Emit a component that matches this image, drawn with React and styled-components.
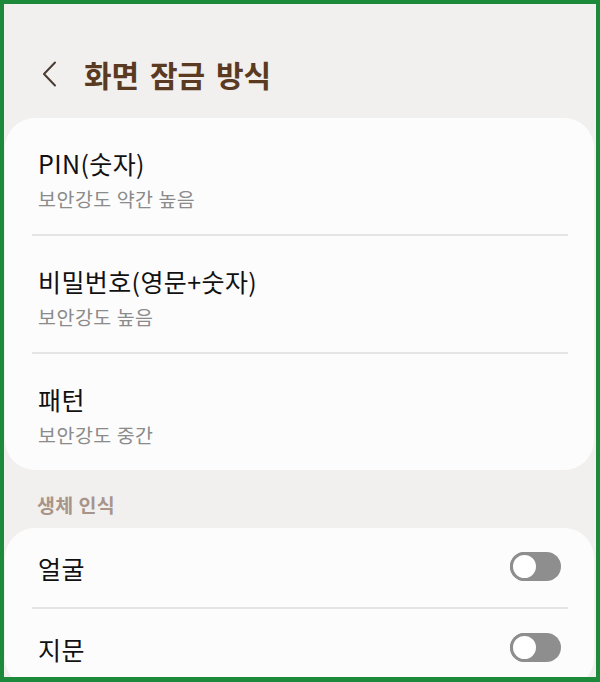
import React from 'react';
import styled, { createGlobalStyle } from 'styled-components';

const GlobalStyle = createGlobalStyle`
  html, body {
    margin: 0;
    padding: 0;
    background: #ffffff;
  }
  * {
    box-sizing: border-box;
  }
`;

const Frame = styled.div`
  width: 600px;
  height: 682px;
  border: 4px solid #1d8a3b;
  border-bottom-width: 5px;
  background: #f2f0ee;
  overflow: hidden;
  font-family: "Noto Sans CJK KR", "Noto Sans", sans-serif;
`;

const Header = styled.div`
  display: flex;
  align-items: center;
  height: 44px;
  margin-top: 48px;
  margin-bottom: 22px;
  padding-left: 38px;
`;

const BackButton = styled.div`
  width: 18px;
  height: 26px;
  display: flex;
  align-items: center;
  color: #4b3c33;
  margin-right: 24px;
`;

const Title = styled.h1`
  margin: 0;
  font-size: 30px;
  font-weight: 700;
  color: #5b3a22;
  word-spacing: 4px;
  line-height: 44px;
`;

const Card = styled.div`
  background: #fcfcfc;
  border-radius: 30px;
  margin: 0 2px 0 1px;
`;

const Row = styled.div`
  display: flex;
  align-items: center;
  justify-content: space-between;
  padding: ${p => (p.$compact ? '0 33px' : '30px 33px 24px')};
  height: ${p => (p.$compact ? '79px' : 'auto')};
`;

const TextBlock = styled.div`
  display: flex;
  flex-direction: column;
`;

const RowTitle = styled.div`
  font-size: 25px;
  line-height: 30px;
  letter-spacing: 0.4px;
  color: #111111;
`;

const RowSub = styled.div`
  font-size: 19.5px;
  line-height: 22px;
  letter-spacing: 0.5px;
  margin-top: 10px;
  color: #8b8b8b;
`;

const Divider = styled.div`
  height: 2px;
  background: #e4e4e4;
  margin: 0 26px 0 27px;
`;

const SectionLabel = styled.div`
  padding: 24px 0 12px 33px;
  font-size: 19.5px;
  line-height: 22px;
  letter-spacing: 0.4px;
  font-weight: 700;
  color: #a8958a;
`;

const Toggle = styled.div`
  position: relative;
  width: 51px;
  height: 29px;
  border-radius: 15px;
  background: #8e8e8e;
  flex-shrink: 0;
  margin-top: -3px;
`;

const Knob = styled.div`
  position: absolute;
  left: 0;
  top: 0;
  width: 29px;
  height: 29px;
  border-radius: 50%;
  background: #ffffff;
  border: 3px solid #8e8e8e;
`;

const lockTypes = [
  { title: 'PIN(숫자)', sub: '보안강도 약간 높음' },
  { title: '비밀번호(영문+숫자)', sub: '보안강도 높음' },
  { title: '패턴', sub: '보안강도 중간' },
];

const biometrics = ['얼굴', '지문'];

export default function App() {
  return (
    <>
      <GlobalStyle />
      <Frame>
        <Header>
          <BackButton>
            <svg width="16" height="26" viewBox="0 0 16 26" fill="none">
              <polyline points="13,1.5 2,13 13,24.5" stroke="currentColor" strokeWidth="2" strokeLinecap="round" strokeLinejoin="round" />
            </svg>
          </BackButton>
          <Title>화면 잠금 방식</Title>
        </Header>

        <Card>
          {lockTypes.map((item, i) => (
            <React.Fragment key={item.title}>
              {i > 0 && <Divider />}
              <Row>
                <TextBlock>
                  <RowTitle>{item.title}</RowTitle>
                  <RowSub>{item.sub}</RowSub>
                </TextBlock>
              </Row>
            </React.Fragment>
          ))}
        </Card>

        <SectionLabel>생체 인식</SectionLabel>

        <Card>
          {biometrics.map((name, i) => (
            <React.Fragment key={name}>
              {i > 0 && <Divider />}
              <Row $compact>
                <RowTitle>{name}</RowTitle>
                <Toggle>
                  <Knob />
                </Toggle>
              </Row>
            </React.Fragment>
          ))}
        </Card>
      </Frame>
    </>
  );
}
